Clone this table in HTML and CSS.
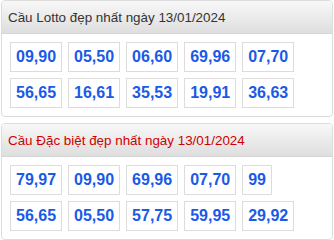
FILE: index.html
```html
<!DOCTYPE html>
<html lang="vi">
<head>
<meta charset="utf-8">
<link rel="stylesheet" href="styles.css">
</head>
<body>
<div class="wrap">
  <section class="card">
    <h2 class="card-title">Cầu Lotto đẹp nhất ngày 13/01/2024</h2>
    <div class="nums">
      <span class="num">09,90</span>
      <span class="num">05,50</span>
      <span class="num">06,60</span>
      <span class="num">69,96</span>
      <span class="num">07,70</span>
      <span class="num">56,65</span>
      <span class="num">16,61</span>
      <span class="num">35,53</span>
      <span class="num">19,91</span>
      <span class="num">36,63</span>
    </div>
  </section>
  <section class="card">
    <h2 class="card-title red">Cầu Đặc biệt đẹp nhất ngày 13/01/2024</h2>
    <div class="nums">
      <span class="num">79,97</span>
      <span class="num">09,90</span>
      <span class="num">69,96</span>
      <span class="num">07,70</span>
      <span class="num">99</span>
      <span class="num">56,65</span>
      <span class="num">05,50</span>
      <span class="num">57,75</span>
      <span class="num">59,95</span>
      <span class="num">29,92</span>
    </div>
  </section>
</div>
</body>
</html>
```
FILE: styles.css
```css
html, body {
  margin: 0;
  padding: 0;
  background: #fff;
  font-family: "Liberation Sans", Arial, sans-serif;
}
.wrap {
  padding: 0 1px;
}
.card {
  border: 1px solid #dcdcdc;
  border-radius: 4px;
  margin-bottom: 6px;
  overflow: hidden;
}
.card-title {
  margin: 0;
  height: 32px;
  line-height: 33px;
  padding-left: 6px;
  font-size: 13.4px;
  font-weight: normal;
  color: #333;
  background: linear-gradient(#f8f8f8, #dedede);
  border-bottom: 1px solid #d6d6d6;
}
.card-title.red {
  color: #d00000;
}
.nums {
  display: flex;
  flex-wrap: wrap;
  gap: 6px;
  padding: 8px 7px 8px 8px;
}
.num {
  box-sizing: border-box;
  height: 30px;
  line-height: 28px;
  padding: 0 5px;
  border: 1px solid #dcdcdc;
  font-size: 16px;
  font-weight: bold;
  color: #1a5ae8;
}
```
